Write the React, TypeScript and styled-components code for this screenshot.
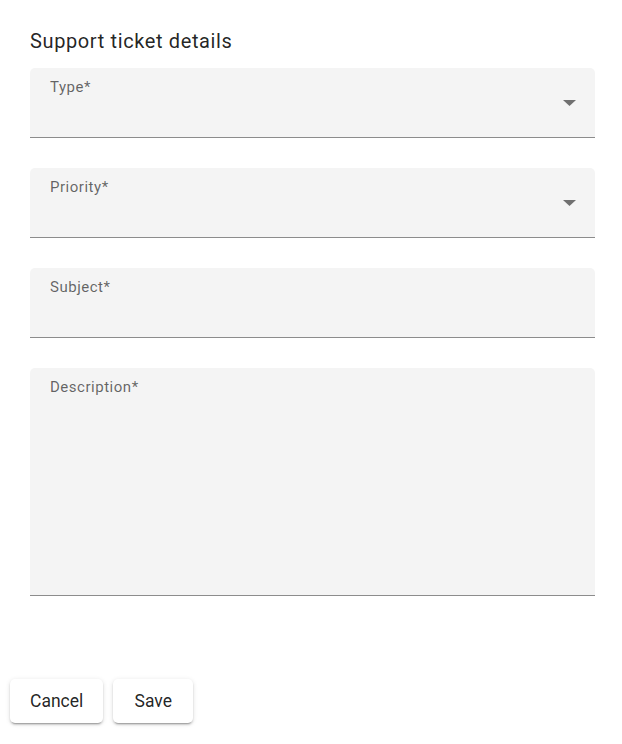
import styled, { createGlobalStyle } from "styled-components";

const GlobalStyle = createGlobalStyle`
  html, body {
    margin: 0;
    padding: 0;
    background: #ffffff;
    font-family: Roboto, "Liberation Sans", sans-serif;
  }
`;

type FieldDef = { label: string; select?: boolean; tall?: boolean };

const fields: FieldDef[] = [
  { label: "Type*", select: true },
  { label: "Priority*", select: true },
  { label: "Subject*" },
  { label: "Description*", tall: true },
];

function DropArrow() {
  return (
    <ArrowIcon viewBox="0 0 13 6" width={13} height={6}>
      <path d="M0 0h13L6.5 6z" fill="rgba(0,0,0,0.54)" />
    </ArrowIcon>
  );
}

function App() {
  return (
    <Page>
      <GlobalStyle />
      <Form>
        <Title>Support ticket details</Title>
        <Fields>
          {fields.map((f) => (
            <FilledField key={f.label} tall={f.tall}>
              <FieldLabel>{f.label}</FieldLabel>
              {f.select && <DropArrow />}
            </FilledField>
          ))}
        </Fields>
      </Form>
      <Actions>
        <ActionButton>Cancel</ActionButton>
        <ActionButton>Save</ActionButton>
      </Actions>
    </Page>
  );
}

export default App;

const Page = styled.div`
  width: 622px;
  height: 744px;
  display: flex;
  flex-direction: column;
  box-sizing: border-box;
`;

const Form = styled.div`
  padding: 29px 27px 0 30px;
  display: flex;
  flex-direction: column;
`;

const Title = styled.h2`
  margin: 0 0 15px;
  font-size: 20px;
  line-height: 24px;
  font-weight: 400;
  letter-spacing: 0.62px;
  color: rgba(0, 0, 0, 0.87);
`;

const Fields = styled.div`
  display: flex;
  flex-direction: column;
  gap: 30px;
`;

const FilledField = styled.div<{ tall?: boolean }>`
  position: relative;
  height: ${(p) => (p.tall ? "228px" : "70px")};
  box-sizing: border-box;
  padding: 10px 20px 0;
  background: #f4f4f4;
  border-radius: 5px 5px 0 0;
  border-bottom: 1.25px solid #8c8c8c;
`;

const FieldLabel = styled.span`
  display: block;
  font-size: 15px;
  line-height: 18px;
  letter-spacing: 0.52px;
  color: rgba(0, 0, 0, 0.6);
`;

const ArrowIcon = styled.svg`
  position: absolute;
  right: 19px;
  top: 32px;
`;

const Actions = styled.div`
  display: flex;
  gap: 10px;
  padding-left: 10px;
  margin-top: 83px;
`;

const ActionButton = styled.button`
  min-width: 80px;
  height: 44px;
  padding: 0 20px;
  border: none;
  border-radius: 5px;
  background: #ffffff;
  font-family: Roboto, "Liberation Sans", sans-serif;
  font-size: 17.5px;
  font-weight: 400;
  letter-spacing: 0;
  color: rgba(0, 0, 0, 0.87);
  box-shadow: 0 3px 1px -2px rgba(0, 0, 0, 0.2), 0 2px 2px 0 rgba(0, 0, 0, 0.14),
    0 1px 5px 0 rgba(0, 0, 0, 0.12);
  cursor: pointer;
`;
